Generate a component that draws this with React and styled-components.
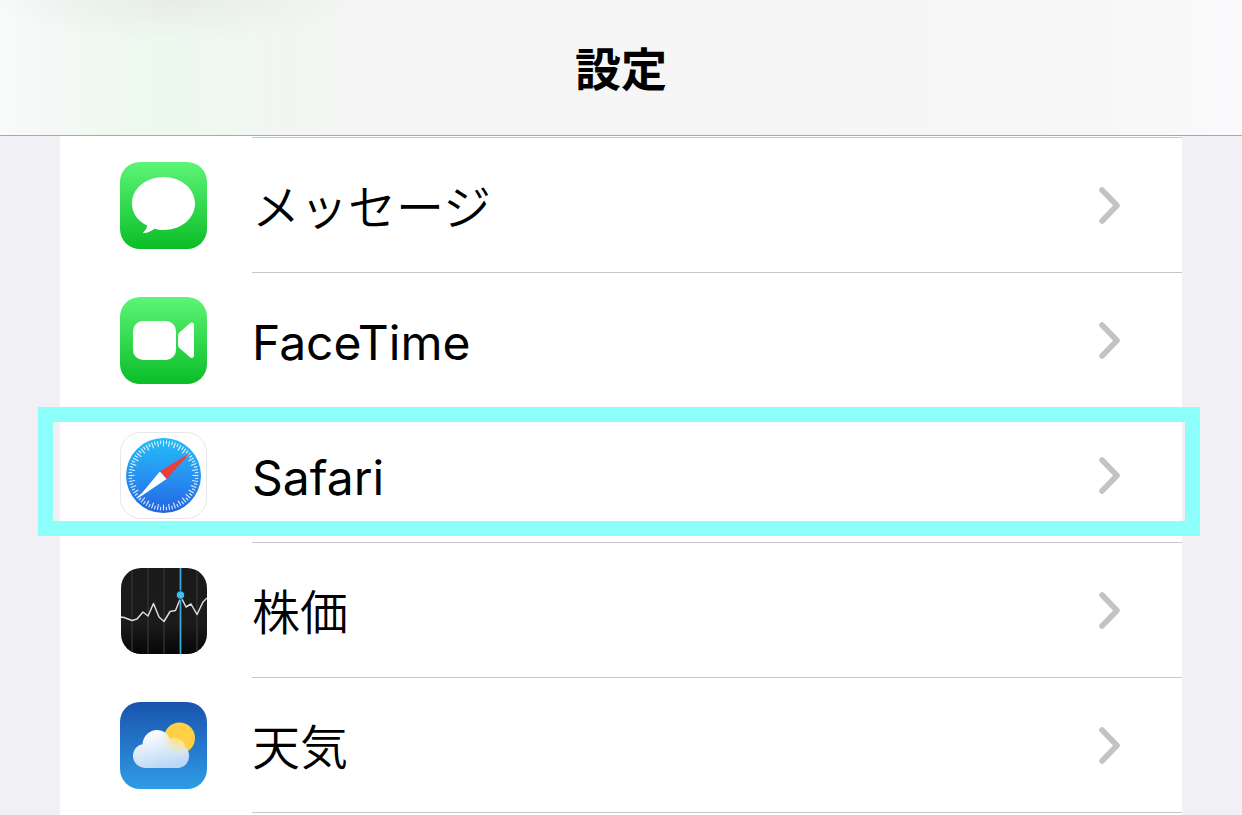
import React from "react";
import styled, { createGlobalStyle } from "styled-components";

const GlobalStyle = createGlobalStyle`
  * {
    box-sizing: border-box;
  }

  body {
    margin: 0;
    background-color: #f0f0f5;
    color: #000;
    font-family: Inter, "Noto Sans CJK JP", sans-serif;
  }
`;

const Page = styled.div`
  min-height: 100vh;
  display: flex;
  flex-direction: column;
`;

const Header = styled.header`
  height: 136px;
  padding-top: 2px;
  display: flex;
  align-items: center;
  justify-content: center;
  border-bottom: 1px solid #a9a9ab;
  background:
    radial-gradient(ellipse 180px 40px at 14% 0, #e8ece8, #e8ece800),
    linear-gradient(
      to right,
      #f9fafa 0,
      #f6f8f7 4%,
      #eff9f1 8%,
      #edf8ef 13%,
      #eff8f1 18%,
      #f3f5f3 23%,
      #f5f5f5 32%,
      #f6f6f6 84%,
      #fafafc 100%
    );
`;

const Title = styled.h1`
  margin: 0;
  font-size: 46px;
  line-height: 64px;
  font-weight: 700;
`;

const Card = styled.main`
  flex: 1;
  margin: 0 60px;
  padding-top: 1px;
  background-color: #fff;
`;

const List = styled.ul`
  margin: 0;
  padding: 0;
  list-style: none;
`;

const Item = styled.li`
  position: relative;
`;

const RowLink = styled.a`
  display: flex;
  align-items: stretch;
  gap: 45px;
  padding-left: 60px;
  color: inherit;
  text-decoration: none;

  svg {
    flex: none;
    align-self: center;
  }
`;

const RowBody = styled.span`
  flex: 1;
  height: 135px;
  padding-right: 60px;
  display: flex;
  align-items: center;
  justify-content: space-between;
  border-bottom: 1px solid #c6c6c8;

  ${Item}:first-child & {
    height: 136px;
    border-top: 1px solid #c6c6c8;
  }
`;

const Label = styled.span`
  padding-top: 6px;
  font-size: 48px;
  line-height: 64px;
  font-weight: ${({ $japanese }) => ($japanese ? 350 : 400)};
`;

const Highlight = styled.span`
  position: absolute;
  top: -1px;
  left: -22px;
  right: -18px;
  height: 129px;
  border: 15px solid #8dfffb;
  pointer-events: none;
`;

const AppIcon = ({ children }) => (
  <svg width="87" height="87" viewBox="0 0 87 87" aria-hidden="true">
    {children}
  </svg>
);

const GreenTile = ({ id }) => (
  <>
    <defs>
      <linearGradient id={id} x1="0" y1="0" x2="0" y2="1">
        <stop offset="0" stopColor="#5df577" />
        <stop offset="1" stopColor="#0abd27" />
      </linearGradient>
    </defs>
    <rect width="87" height="87" rx="20" fill={`url(#${id})`} />
  </>
);

const MessagesIcon = () => (
  <AppIcon>
    <GreenTile id="messages-tile" />
    <path
      fill="#fff"
      d="M43.500 15C61 15 75 26.500 75 41.500S61 68 43.500 68c-3.500 0-6-.3-9-1.200-3.500 2.600-7 4.200-10.500 4.300-.9 0-1-.7-.4-1.200 2-1.700 3.300-3.800 3.600-6.300C17.500 59 12 51 12 41.500 12 26.500 26 15 43.500 15z"
    />
  </AppIcon>
);

const FaceTimeIcon = () => (
  <AppIcon>
    <GreenTile id="facetime-tile" />
    <rect x="13" y="24" width="43" height="39" rx="10" fill="#fff" />
    <path
      fill="#fff"
      d="M58 39c0-1.500.6-2.800 1.700-3.800l10.300-9c1.800-1.500 4-.5 4 1.800v30.500c0 2.300-2.200 3.300-4 1.800l-10.300-9C58.600 50.300 58 49 58 47.500z"
    />
  </AppIcon>
);

const SafariIcon = () => (
  <AppIcon>
    <defs>
      <linearGradient id="safari-dial" x1="0" y1="0" x2="0" y2="1">
        <stop offset="0" stopColor="#24bdf3" />
        <stop offset="0.5" stopColor="#2793f3" />
        <stop offset="1" stopColor="#2264e0" />
      </linearGradient>
    </defs>
    <rect
      x="0.5"
      y="0.5"
      width="86"
      height="86"
      rx="20"
      fill="#fff"
      stroke="#e7e7e9"
    />
    <circle cx="43.500" cy="43.500" r="37.500" fill="url(#safari-dial)" />
    {Array.from({ length: 72 }, (_, i) => (
      <line
        key={i}
        x1="43.500"
        y1="8.500"
        x2="43.500"
        y2={i % 2 ? 12 : 14.5}
        stroke="#fff"
        strokeWidth="1.100"
        opacity="0.85"
        transform={`rotate(${i * 5} 43.500 43.500)`}
      />
    ))}
    <path fill="#f03c37" d="M70 21L39.900 39.500l6.600 7.600z" />
    <path fill="#fff" d="M17 67l22.900-27.500 6.600 7.600z" />
  </AppIcon>
);

const StocksIcon = () => (
  <AppIcon>
    <defs>
      <linearGradient id="stocks-tile" x1="0" y1="0" x2="0" y2="1">
        <stop offset="0" stopColor="#1a1a1b" />
        <stop offset="0.65" stopColor="#1b1b1c" />
        <stop offset="1" stopColor="#060606" />
      </linearGradient>
      <clipPath id="stocks-clip">
        <rect x="1" y="1" width="86" height="86" rx="20" />
      </clipPath>
    </defs>
    <g clipPath="url(#stocks-clip)">
      <rect width="87" height="87" fill="url(#stocks-tile)" />
      <path
        stroke="#303031"
        strokeWidth="1.500"
        d="M12 0v87M28 0v87M44 0v87M77 0v87"
      />
      <path
        fill="none"
        stroke="#dcdcdc"
        strokeWidth="1.500"
        strokeLinejoin="round"
        d="M0 50l4 .5 8 3 5-1.500 6-7 5 4 5.500-12.500L39 50l5 4.500 6-10 5.500-1L61 30l5 10 5-3 6 10.500L83 35l4-4"
      />
      <path stroke="#36aadb" strokeWidth="1.800" d="M60.500 0v87" />
      <circle cx="60.500" cy="28" r="4.200" fill="#43bdf0" stroke="#17262d" />
    </g>
  </AppIcon>
);

const WeatherIcon = () => (
  <AppIcon>
    <defs>
      <linearGradient id="weather-sky" x1="0" y1="0" x2="0" y2="1">
        <stop offset="0" stopColor="#1854ad" />
        <stop offset="1" stopColor="#309be6" />
      </linearGradient>
      <linearGradient
        id="weather-cloud"
        gradientUnits="userSpaceOnUse"
        x1="35"
        y1="28"
        x2="44"
        y2="67"
      >
        <stop offset="0" stopColor="#fff" />
        <stop offset="1" stopColor="#b9d6f5" />
      </linearGradient>
      <radialGradient
        id="weather-glow"
        gradientUnits="userSpaceOnUse"
        cx="59"
        cy="36"
        r="19"
      >
        <stop offset="0" stopColor="#ffdc62" />
        <stop offset="0.4" stopColor="#fbe397" stopOpacity="0.8" />
        <stop offset="1" stopColor="#e7e8dc" stopOpacity="0" />
      </radialGradient>
      <path
        id="weather-shape"
        d="M26 66C18.500 66 13 60.600 13 54c0-6.300 4.300-11 9.500-11.800C23 34.500 29 28 37 28c6 0 10.800 3.600 13 9.200 1.600-.8 3-1 5-1 5.500 0 9.500 4 10.300 9.300C68.500 47.500 69 51 69 54c0 7-5 12-12 12z"
      />
    </defs>
    <rect width="87" height="87" rx="20" fill="url(#weather-sky)" />
    <circle cx="59.500" cy="36" r="15.500" fill="#ffd044" />
    <use href="#weather-shape" fill="url(#weather-cloud)" />
    <use href="#weather-shape" fill="url(#weather-glow)" />
  </AppIcon>
);

const Chevron = () => (
  <svg width="24" height="38" viewBox="0 0 24 38" aria-hidden="true">
    <path
      d="M4 4l15 15.500L4 35"
      fill="none"
      stroke="#c3c3c6"
      strokeWidth="5.600"
      strokeLinecap="round"
      strokeLinejoin="round"
    />
  </svg>
);

const apps = [
  { id: "messages", name: "メッセージ", Icon: MessagesIcon, japanese: true },
  { id: "facetime", name: "FaceTime", Icon: FaceTimeIcon },
  { id: "safari", name: "Safari", Icon: SafariIcon, highlighted: true },
  { id: "stocks", name: "株価", Icon: StocksIcon, japanese: true },
  { id: "weather", name: "天気", Icon: WeatherIcon, japanese: true },
];

const App = () => {
  return (
    <>
      <GlobalStyle />
      <Page lang="ja">
        <Header>
          <Title>設定</Title>
        </Header>
        <Card>
          <List>
            {apps.map(({ id, name, Icon, japanese, highlighted }) => (
              <Item key={id}>
                <RowLink href={`#${id}`}>
                  <Icon />
                  <RowBody>
                    <Label $japanese={japanese}>{name}</Label>
                    <Chevron />
                  </RowBody>
                </RowLink>
                {highlighted && <Highlight />}
              </Item>
            ))}
          </List>
        </Card>
      </Page>
    </>
  );
};

export default App;
